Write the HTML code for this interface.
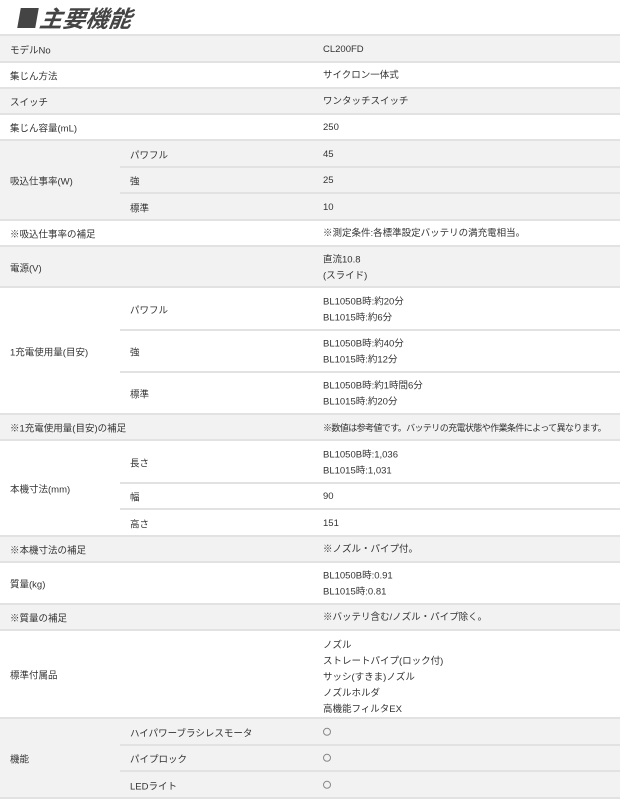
<!DOCTYPE html>
<html><head><meta charset="utf-8"><style>
*{margin:0;padding:0;box-sizing:border-box}
body{width:620px;height:800px;background:#fff;font-family:"Liberation Sans","Noto Sans CJK JP",sans-serif;color:#333;font-size:9.5px;position:relative;overflow:hidden}
h1{position:absolute;left:40px;top:2px;font-size:23px;font-style:italic;font-weight:bold;color:#444;line-height:30px;font-family:"Noto Sans CJK JP",sans-serif;transform:skewX(-8deg)}
.sq{position:absolute;left:19px;top:8px;width:18px;height:20px;background:#444;transform:skewX(-10deg)}
.r{position:absolute;left:0;width:620px;border-bottom:2px solid #e2e2e2}
.g{background:#f2f2f2}
.l{position:absolute;left:10px;top:50%;transform:translateY(-45%);white-space:nowrap}
.s{position:absolute;left:120px;right:0;border-bottom:2px solid #e2e2e2}
.sl{position:absolute;left:10px;top:50%;transform:translateY(-45%);white-space:nowrap}
.v{position:absolute;left:323px;top:50%;transform:translateY(-45%);white-space:nowrap;line-height:16px}
.s .v{left:203px}
.top{position:absolute;left:0;top:34px;width:620px;border-top:2px solid #e2e2e2}
.c{display:inline-block;width:8px;height:8px;border:1px solid #888;border-radius:50%;vertical-align:middle}
</style></head><body>
<div class="sq"></div><h1>主要機能</h1>
<div class="top"></div>
<div class="r g" style="top:36px;height:27px"><span class="l">モデルNo</span><span class="v">CL200FD</span></div>
<div class="r" style="top:63px;height:26px"><span class="l">集じん方法</span><span class="v">サイクロン一体式</span></div>
<div class="r g" style="top:89px;height:26px"><span class="l">スイッチ</span><span class="v">ワンタッチスイッチ</span></div>
<div class="r" style="top:115px;height:26px"><span class="l">集じん容量(mL)</span><span class="v">250</span></div>
<div class="r g" style="top:141px;height:80px"><span class="l">吸込仕事率(W)</span>
 <div class="s" style="top:0;height:27px"><span class="sl">パワフル</span><span class="v">45</span></div>
 <div class="s" style="top:27px;height:26px"><span class="sl">強</span><span class="v">25</span></div>
 <div class="s" style="top:53px;height:25px;border:none"><span class="sl">標準</span><span class="v">10</span></div>
</div>
<div class="r" style="top:221px;height:26px"><span class="l">※吸込仕事率の補足</span><span class="v">※測定条件:各標準設定バッテリの満充電相当。</span></div>
<div class="r g" style="top:247px;height:41px"><span class="l">電源(V)</span><span class="v">直流10.8<br>(スライド)</span></div>
<div class="r" style="top:288px;height:127px"><span class="l">1充電使用量(目安)</span>
 <div class="s" style="top:0;height:43px"><span class="sl">パワフル</span><span class="v">BL1050B時:約20分<br>BL1015時:約6分</span></div>
 <div class="s" style="top:43px;height:42px"><span class="sl">強</span><span class="v">BL1050B時:約40分<br>BL1015時:約12分</span></div>
 <div class="s" style="top:85px;height:40px;border:none"><span class="sl">標準</span><span class="v">BL1050B時:約1時間6分<br>BL1015時:約20分</span></div>
</div>
<div class="r g" style="top:415px;height:26px"><span class="l">※1充電使用量(目安)の補足</span><span class="v" style="font-size:9px;letter-spacing:-0.6px">※数値は参考値です。バッテリの充電状態や作業条件によって異なります。</span></div>
<div class="r" style="top:441px;height:96px"><span class="l">本機寸法(mm)</span>
 <div class="s" style="top:0;height:43px"><span class="sl">長さ</span><span class="v">BL1050B時:1,036<br>BL1015時:1,031</span></div>
 <div class="s" style="top:43px;height:26px"><span class="sl">幅</span><span class="v">90</span></div>
 <div class="s" style="top:69px;height:25px;border:none"><span class="sl">高さ</span><span class="v">151</span></div>
</div>
<div class="r g" style="top:537px;height:26px"><span class="l">※本機寸法の補足</span><span class="v">※ノズル・パイプ付。</span></div>
<div class="r" style="top:563px;height:42px"><span class="l">質量(kg)</span><span class="v">BL1050B時:0.91<br>BL1015時:0.81</span></div>
<div class="r g" style="top:605px;height:26px"><span class="l">※質量の補足</span><span class="v">※バッテリ含む/ノズル・パイプ除く。</span></div>
<div class="r" style="top:631px;height:88px"><span class="l">標準付属品</span><span class="v">ノズル<br>ストレートパイプ(ロック付)<br>サッシ(すきま)ノズル<br>ノズルホルダ<br>高機能フィルタEX</span></div>
<div class="r g" style="top:719px;height:80px"><span class="l">機能</span>
 <div class="s" style="top:0;height:27px"><span class="sl">ハイパワーブラシレスモータ</span><span class="v"><span class="c"></span></span></div>
 <div class="s" style="top:27px;height:26px"><span class="sl">パイプロック</span><span class="v"><span class="c"></span></span></div>
 <div class="s" style="top:53px;height:25px;border:none"><span class="sl">LEDライト</span><span class="v"><span class="c"></span></span></div>
</div>
</body></html>
